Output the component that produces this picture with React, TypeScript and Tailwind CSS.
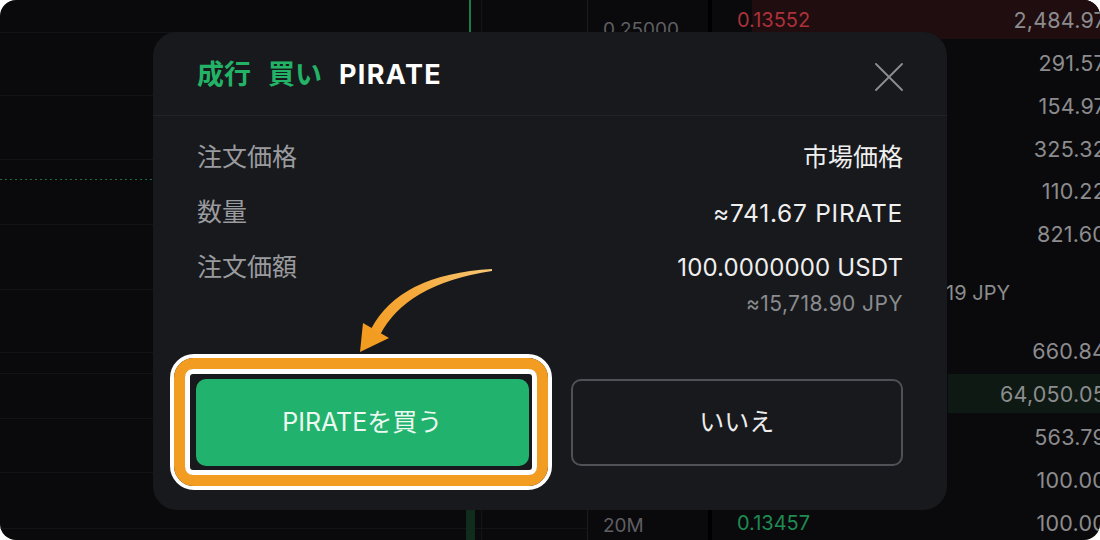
import React from "react";

const asks: [string, string, number][] = [
  ["0.13552", "2,484.97", 354],
  ["0.13540", "291.57", 0],
  ["0.13531", "154.97", 0],
  ["0.13520", "325.32", 0],
  ["0.13512", "110.22", 0],
  ["0.13500", "821.60", 0],
];
const bids: [string, string, number][] = [
  ["0.13480", "660.84", 0],
  ["0.13475", "64,050.05", 158],
  ["0.13470", "563.79", 0],
  ["0.13463", "100.00", 0],
  ["0.13457", "100.00", 0],
];

function Row({ p, q, bar, side, h }: { p: string; q: string; bar: number; side: "ask" | "bid"; h: string }) {
  return (
    <div className={`relative shrink-0 flex items-center justify-between pl-[25px] ${h}`}>
      {bar > 0 && (
        <div
          className={`absolute right-0 top-[1px] bottom-[3px] ${side === "ask" ? "bg-[#1f0d10]" : "bg-[#0e1913]"}`}
          style={{ width: bar }}
        />
      )}
      <span className={`relative text-[20px] ${side === "ask" ? "text-[#ad3139]" : "text-[#1f8a52]"}`}>{p}</span>
      <span className="relative text-[21.5px] tracking-[0.01em] text-[#8c8c8e]">{q}</span>
    </div>
  );
}

export default function App() {
  return (
    <div className="w-[1100px] h-[540px] bg-white [font-family:Inter,'Noto_Sans_CJK_JP',sans-serif]">
      <div className="relative w-[1100px] h-[540px] rounded-[16px] overflow-hidden bg-[#0a0a0c] flex">
        {/* chart */}
        <div className="w-[587px] h-full shrink-0">
          <svg width="587" height="540" viewBox="0 0 587 540">
            {[32, 95, 159, 224, 289, 352, 373, 418, 472, 528].map((y) => (
              <line key={y} x1="0" x2="587" y1={y + 0.5} y2={y + 0.5} stroke="#141416" strokeWidth="1" />
            ))}
            <line x1="481.5" x2="481.5" y1="0" y2="540" stroke="#151517" strokeWidth="1" />
            <line x1="0" x2="587" y1="179.5" y2="179.5" stroke="#1e6b44" strokeWidth="1" strokeDasharray="2 3" />
            <line x1="470" x2="470" y1="0" y2="60" stroke="#1fa45c" strokeWidth="1.5" />
            <rect x="466" y="470" width="9" height="70" fill="#0f2c1d" />
          </svg>
        </div>
        {/* axis column */}
        <div className="w-[121px] h-full shrink-0 border-l border-[#1c1c1f] flex flex-col justify-between pl-[15px] pt-[16px] pb-[0px] text-[19px] text-[#5f5f63]">
          <span>0.25000</span>
          <span>20M</span>
        </div>
        <div className="w-[4px] h-full bg-black shrink-0" />
        {/* orderbook */}
        <div className="flex-1 h-full mr-[-6px] flex flex-col mt-[-1px]">
          {asks.map(([p, q, b]) => (
            <Row key={p} p={p} q={q} bar={b} side="ask" h="h-[42.8px]" />
          ))}
          <div className="h-[74px] shrink-0 flex items-center justify-between pl-[25px] pr-[96px]">
            <span className="text-[24px] text-[#1fa45c]">0.13490</span>
            <span className="text-[20px] text-[#8c8c8e]">≈21.19 JPY</span>
          </div>
          {bids.map(([p, q, b]) => (
            <Row key={p} p={p} q={q} bar={b} side="bid" h="h-[43px]" />
          ))}
        </div>

        {/* modal */}
        <div className="absolute left-[153px] top-[32px] w-[794px] h-[478px] rounded-[24px] bg-[#18191c] flex flex-col">
          <div className="h-[84px] shrink-0 px-[44px] pt-[2px] flex items-center justify-between border-b border-[#222327]">
            <div className="flex items-center gap-[17px] text-[27px] font-bold leading-none">
              <span className="text-[#22b366]">成行</span>
              <span className="text-[#22b366]">買い</span>
              <span className="text-white tracking-[0.05em]">PIRATE</span>
            </div>
            <svg width="28" height="28" viewBox="0 0 28 28" className="mt-[4px]">
              <path d="M1 1 L27 27 M27 1 L1 27" stroke="#8d8e92" strokeWidth="1.8" strokeLinecap="round" />
            </svg>
          </div>
          <div className="px-[44px] pt-[27px] flex flex-col gap-[25px]">
            <div className="h-[30px] flex items-center justify-between">
              <span className="text-[25px] text-[#9a9b9f]">注文価格</span>
              <span className="text-[25px] text-[#efefef]">市場価格</span>
            </div>
            <div className="h-[30px] flex items-center justify-between">
              <span className="text-[25px] text-[#9a9b9f]">数量</span>
              <span className="text-[24.5px] text-[#efefef] tracking-[0.03em]">≈741.67 PIRATE</span>
            </div>
            <div className="flex flex-col">
              <div className="h-[30px] flex items-center justify-between">
                <span className="text-[25px] text-[#9a9b9f]">注文価額</span>
                <span className="text-[24px] text-[#efefef] tracking-[0.005em]">100.0000000 USDT</span>
              </div>
              <div className="mt-[9px] h-[24px] flex items-center justify-end">
                <span className="text-[21px] text-[#8a8b8f] tracking-[0.02em]">≈15,718.90 JPY</span>
              </div>
            </div>
          </div>
          <div className="mt-auto pl-[43px] pr-[44px] pb-[44px] grid grid-cols-2 gap-[42px]">
            <button className="h-[87px] rounded-[10px] bg-[#21b36d] text-[25px] text-[#eef8f2]">
              PIRATEを買う
            </button>
            <button className="h-[87px] rounded-[10px] border-2 border-[#505156] text-[25px] text-[#ececec]">
              いいえ
            </button>
          </div>
        </div>

        {/* highlight frame */}
        <div className="absolute left-[170px] top-[354px] w-[382px] h-[136px] rounded-[24px] border-[4px] border-white pointer-events-none">
          <div className="w-full h-full rounded-[20px] border-[11px] border-[#f39c22]">
            <div className="w-full h-full rounded-[8px] border-[5px] border-white" />
          </div>
        </div>

        {/* arrow */}
        <svg className="absolute left-[340px] top-[260px] pointer-events-none" width="170" height="100" viewBox="0 0 170 100">
          <defs>
            <linearGradient id="ag" x1="152" y1="10" x2="25" y2="90" gradientUnits="userSpaceOnUse">
              <stop offset="0" stopColor="#f8c775" />
              <stop offset="0.5" stopColor="#f5aa3c" />
              <stop offset="1" stopColor="#f39c22" />
            </linearGradient>
          </defs>
          <path d="M152 9 Q 60 14 31 69 L 40 75 Q 66 24 152 11 Z" fill="url(#ag)" />
          <path d="M20 92 L 23 63 L 49 78 Z" fill="#f39c22" />
        </svg>
      </div>
    </div>
  );
}
